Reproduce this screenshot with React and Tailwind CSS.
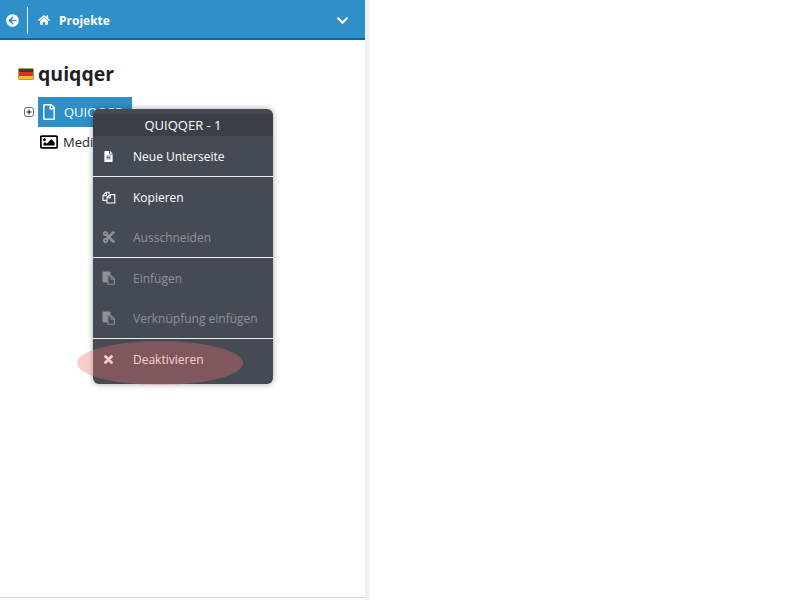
import React from "react";
import {
  FaArrowCircleLeft,
  FaHome,
  FaChevronDown,
  FaRegFile,
  FaRegImage,
  FaFileAlt,
  FaCut,
} from "react-icons/fa";

function Flag() {
  return (
    <span className="flex h-[12px] w-[16px] flex-col overflow-hidden rounded-[1px] border border-[#b59a5a]">
      <span className="h-[3px] bg-[#3a3a3a]" />
      <span className="h-[4px] bg-[#d8322e]" />
      <span className="h-[3px] bg-[#f2c230]" />
    </span>
  );
}

function PlusBox() {
  return (
    <svg width="10" height="10" viewBox="0 0 10 10" className="ml-[24px]">
      <rect x="0.5" y="0.5" width="9" height="9" rx="2.5" fill="#fff" stroke="#666" />
      <path d="M2.5 5h5M5 2.5v5" stroke="#111" strokeWidth="1" />
    </svg>
  );
}

function CopyIcon() {
  return (
    <svg width="14" height="13" viewBox="0 0 14 13" fill="none" stroke="currentColor" strokeWidth="1.1">
      <path d="M7 3.5V1.2H4.2L1 4.4v5h4" />
      <path d="M1.2 4.6h3.2V1.4" />
      <path d="M5 12V6.5L8 3.6h4.8V12z" />
      <path d="M5.2 6.8h3V3.8" />
    </svg>
  );
}

function PasteIcon() {
  return (
    <svg width="13" height="14" viewBox="0 0 13 14" fill="none">
      <path d="M0.5 1.5a1 1 0 0 1 1-1h6a1 1 0 0 1 1 1V4H5.5v7.5h-4a1 1 0 0 1-1-1z" fill="currentColor" />
      <path d="M6 4.8h3.2L12.4 8v5.3H6z" stroke="currentColor" strokeWidth="1.1" />
      <path d="M9 5v3.2h3.2" stroke="currentColor" strokeWidth="1" />
    </svg>
  );
}

function CloseIcon() {
  return (
    <svg width="9" height="9" viewBox="0 0 9 9">
      <path d="M1.5 1.5l6 6M7.5 1.5l-6 6" stroke="currentColor" strokeWidth="2.8" strokeLinecap="round" />
    </svg>
  );
}

function MenuItem({ icon, label, disabled }) {
  return (
    <div
      className={`flex h-[40px] items-center pl-[9px] text-[12px] ${disabled ? "text-[#8f9297]" : "text-white"}`}
    >
      <span className="flex w-[31px] items-center">{icon}</span>
      <span className="relative top-[1px]">{label}</span>
    </div>
  );
}

function Divider() {
  return <div className="h-px bg-[#eceef0]" />;
}

export default function App() {
  return (
    <div className="relative flex h-[600px] w-[800px] overflow-hidden bg-white font-['Open_Sans',sans-serif] text-[#222]">
      {/* Project panel */}
      <div className="flex h-full w-[369px] flex-col border-r-4 border-[#f0f0f0]">
        <div className="mb-[2px] flex-1 border-b border-[#d8d8d8]">
          <div className="flex h-10 items-center border-b-2 border-[#0069b4] bg-[#2f8fc8] pt-[2px] text-white">
            <span className="flex w-[28px] justify-center border-r border-white/90 py-[7px] pr-[3px]">
              <FaArrowCircleLeft size={13} />
            </span>
            <span className="ml-[10px] flex items-center gap-[9px] text-[12px] font-bold">
              <FaHome size={12} />
              <span className="relative top-[1px]">Projekte</span>
            </span>
            <span className="mr-[16px] ml-auto">
              <FaChevronDown size={13} />
            </span>
          </div>

          <div className="mt-[19px] flex items-center pl-[18px]">
            <Flag />
            <span className="ml-[4px] text-[19.5px] leading-[30px] font-bold">quiqqer</span>
          </div>

          {/* Tree */}
          <div className="mt-[8px] text-[13px]">
            <div className="flex items-center">
              <PlusBox />
              <span className="ml-[4px] flex h-[30px] w-[94px] items-center bg-[#2f8fc8] pl-[3px] text-white">
                <FaRegFile size={16} />
                <span className="relative top-[1px] ml-[7px]">QUIQQER</span>
              </span>
            </div>
            <div className="flex h-[30px] items-center pl-[40px]">
              <FaRegImage size={18} className="text-black" />
              <span className="relative top-[1px] ml-[5px]">Media</span>
            </div>
          </div>
        </div>
      </div>

      {/* Context menu */}
      <div className="absolute top-[109px] left-[93px] w-[180px] overflow-hidden rounded-[6px] bg-[#454b55] pt-[5px] shadow-[0_0_6px_rgba(0,0,0,0.35)]">
        <div className="flex h-[22px] items-center justify-center bg-[#3a3f48] pt-[1px] text-[13px] text-white">
          QUIQQER - 1
        </div>
        <MenuItem icon={<FaFileAlt size={11} className="ml-[1px]" />} label="Neue Unterseite" />
        <Divider />
        <MenuItem icon={<CopyIcon />} label="Kopieren" />
        <MenuItem icon={<FaCut size={14} />} label="Ausschneiden" disabled />
        <Divider />
        <MenuItem icon={<PasteIcon />} label="Einfügen" disabled />
        <MenuItem icon={<PasteIcon />} label="Verknüpfung einfügen" disabled />
        <Divider />
        <MenuItem icon={<span className="ml-[2px] flex"><CloseIcon /></span>} label="Deaktivieren" />
        <div className="h-[5px]" />
      </div>

      {/* Red highlight */}
      <div className="absolute top-[341px] left-[77px] h-[44px] w-[166px] rounded-[50%] bg-[rgba(240,112,112,0.35)]" />
    </div>
  );
}
